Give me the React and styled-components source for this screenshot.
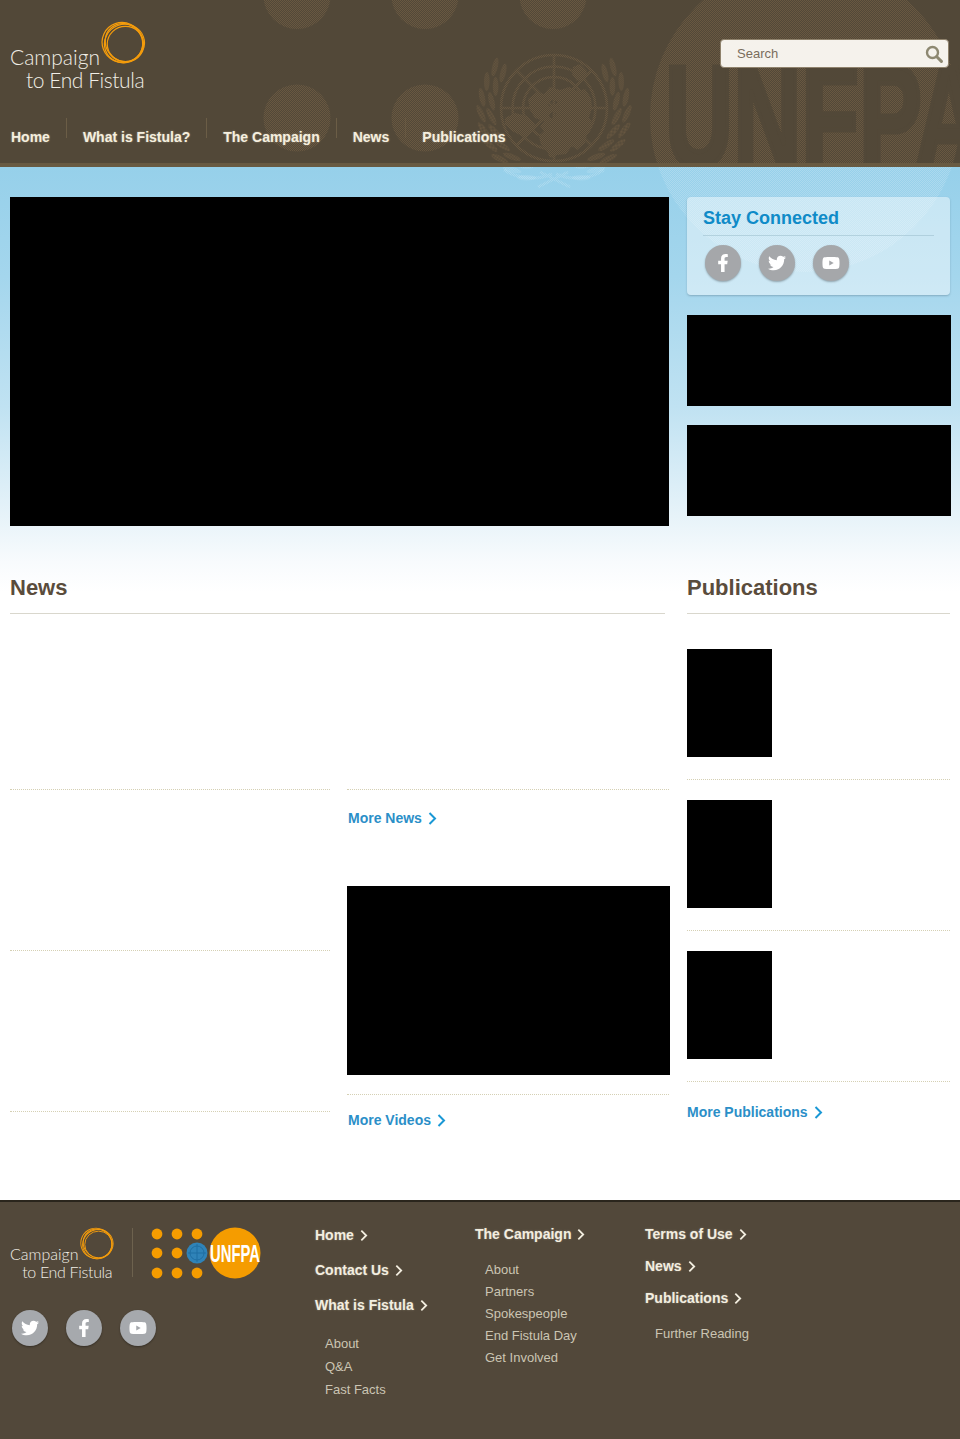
import React from "react";
import styled, { createGlobalStyle } from "styled-components";
import { FaFacebookF, FaTwitter, FaYoutube } from "react-icons/fa";

const Global = createGlobalStyle`
  html, body { margin: 0; padding: 0; background: #fff; }
  body { font-family: "Liberation Sans", Arial, sans-serif; }
  * { box-sizing: border-box; }
  a { text-decoration: none; color: inherit; }
  ul { list-style: none; margin: 0; padding: 0; }
`;

const Page = styled.div`
  width: 960px;
  overflow: hidden;
`;

/* ---------- background artwork ---------- */
const ArtSvg = styled.svg`
  position: absolute;
  left: 0;
  top: 0;
  width: 960px;
  pointer-events: none;
`;

const leaves = [];
[
  { r: 63, from: 118, n: 8, step: 14 },
  { r: 73, from: 112, n: 9, step: 13 },
].forEach(({ r, from, n, step }) => {
  for (let i = 0; i < n; i++) {
    const deg = from + i * step;
    const a = deg * (Math.PI / 180);
    leaves.push({ x: Math.cos(a) * r, y: Math.sin(a) * r + 2, rot: deg - 22 });
  }
});

function Artwork({ id, mark, top, height }) {
  const cx = 554;
  const cy = 108;
  return (
    <ArtSvg viewBox={`0 ${top} 960 ${height}`} height={height} aria-hidden="true">
      <defs>
        <pattern id={id} width="2" height="2" patternUnits="userSpaceOnUse">
          <rect x="0" y="0" width="1" height="1" fill={mark} />
          <rect x="1" y="1" width="1" height="1" fill={mark} />
        </pattern>
      </defs>
      <g fill={`url(#${id})`}>
        <circle cx="297" cy="-4.5" r="33.5" />
        <circle cx="425" cy="-4.5" r="33.5" />
        <circle cx="553" cy="-4.5" r="33.5" />
        <circle cx="297" cy="118" r="33.5" />
        <circle cx="425" cy="118" r="33.5" />
        <circle cx="805" cy="117" r="155" />
      </g>
      <g stroke={`url(#${id})`} fill="none">
        <circle cx={cx} cy={cy} r="53" strokeWidth="2.6" />
        <circle cx={cx} cy={cy} r="41.5" strokeWidth="2.6" />
        <circle cx={cx} cy={cy} r="31" strokeWidth="2.6" />
        <path strokeWidth="2.6" d="M554 55V161M501 108H607M517 71L591 145M591 71L517 145" />
      </g>
      <g fill={`url(#${id})`} fillRule="evenodd">
        <path d="M528 99l9-7 7 2 6-7 10 3 9-3 9 4 7-2 6 9 1 10-3 9 4 7-6 10-2 9-8 7-5-4-6 8-9 1-7 3-3-7-6-6-2-9 5-5-4-5 4-5-9-3-5-8zM548 103l6-4 5 4-1 5-4 2 2 4-2 5-5-2 1-4 3-3-1-4-3 1z" />
        <path d="M505 118l10-5 12 3 8 8-4 9-9 3-10-5-7-7zM573 67l7-3 7 7-2 8-8 2-5-7z" />
        {leaves.map((l, i) => (
          <g key={i}>
            <ellipse cx={cx + l.x} cy={cy + l.y} rx="2.8" ry="9.5" transform={`rotate(${l.rot} ${cx + l.x} ${cy + l.y})`} />
            <ellipse cx={cx - l.x} cy={cy + l.y} rx="2.8" ry="9.5" transform={`rotate(${-l.rot} ${cx - l.x} ${cy + l.y})`} />
          </g>
        ))}
      </g>
      <g stroke={`url(#${id})`} fill="none" strokeWidth="3">
        <path d="M504 170C520 180 538 180 552 174M604 170C588 180 570 180 556 174M538 187L568 172M570 187L540 172" />
      </g>
    </ArtSvg>
  );
}

const Wordmark = styled.text`
  font-family: "Liberation Sans", Arial, sans-serif;
  font-weight: 700;
  font-size: 144px;
  fill: #524838;
  stroke: #524838;
  stroke-width: 5px;
`;

/* ---------- logo ---------- */
const Brand = styled.a`
  position: relative;
  display: block;
  width: max-content;
  font-family: Lato, "Open Sans", sans-serif;
  font-weight: 300;
  font-size: ${(p) => p.$size}px;
  line-height: 1.1;
  color: #f1eee6;
`;

const BrandLine = styled.span`
  display: block;
  padding-left: ${(p) => (p.$indent ? "0.76em" : "0")};
  letter-spacing: ${(p) => (p.$indent ? "-0.02em" : "0")};
`;

const RingSvg = styled.svg`
  position: absolute;
  left: 4.35em;
  top: -1.12em;
  width: 2.14em;
  height: 2.1em;
`;

function Logo({ size }) {
  return (
    <Brand href="#" $size={size}>
      <RingSvg viewBox="0 0 46 45" aria-hidden="true">
        <g fill="none" stroke="#f49c0c" strokeWidth="1.25">
          <ellipse cx="22" cy="22" rx="21" ry="20.4" transform="rotate(25 22 22)" />
          <ellipse cx="24" cy="23" rx="20.6" ry="19.6" transform="rotate(-20 24 23)" />
          <ellipse cx="25" cy="23.5" rx="18.6" ry="18" />
          <ellipse cx="23.5" cy="22" rx="20" ry="18.6" transform="rotate(50 23.5 22)" />
        </g>
      </RingSvg>
      <BrandLine>Campaign</BrandLine>
      <BrandLine $indent>to End Fistula</BrandLine>
    </Brand>
  );
}

/* ---------- header ---------- */
const Header = styled.header`
  position: relative;
  height: 167px;
  background: #524838;
  border-bottom: 4px solid #685a42;
  overflow: hidden;
`;

const TopRow = styled.div`
  position: relative;
  display: flex;
  justify-content: space-between;
  align-items: flex-start;
  height: 118px;
  padding: 45px 11px 0 10px;
`;

const SearchBox = styled.form`
  display: flex;
  align-items: center;
  width: 229px;
  height: 29px;
  margin-top: -6px;
  padding: 0 5px 0 16px;
  background: #f5f2ec;
  border: 1px solid #8f826c;
  border-radius: 4px;
`;

const SearchInput = styled.input`
  flex: 1;
  min-width: 0;
  border: 0;
  padding: 0;
  background: transparent;
  font: 13px "Liberation Sans", Arial, sans-serif;
  color: #7a6d5c;
  outline: none;
  &::placeholder { color: #7a6d5c; opacity: 1; }
`;

const Nav = styled.nav`
  position: relative;
  display: flex;
  padding-left: 11px;
`;

const NavItem = styled.a`
  display: block;
  height: 20px;
  padding: 11px 16px 0 16px;
  border-right: 1px solid ${(p) => (p.$faint ? "rgba(120,102,74,.35)" : "#6b5d46")};
  font-size: 14px;
  line-height: 16px;
  font-weight: 700;
  color: #f5efdf;
  text-shadow: 0 0 2px rgba(255, 245, 220, 0.45);
  white-space: nowrap;
  &:first-child { padding-left: 0; }
  &:last-child { border-right: 0; }
`;

/* ---------- body ---------- */
const Wash = styled.div`
  position: relative;
  background: linear-gradient(
    180deg,
    #96d0ea 0,
    #a4d6ed 110px,
    #c0e2f2 240px,
    #e7f3f9 350px,
    #f8fbfd 395px,
    #fff 425px
  );
`;

const Hero = styled.section`
  position: relative;
  display: grid;
  grid-template-columns: 659px 264px;
  column-gap: 18px;
  padding: 30px 0 0 10px;
`;

const BlackBlock = styled.div`
  background: #000;
  width: ${(p) => p.$w || "auto"};
  height: ${(p) => p.$h}px;
  margin-bottom: ${(p) => p.$mb || 0}px;
`;

const Panel = styled.div`
  width: 263px;
  height: 98px;
  margin-bottom: 20px;
  padding: 10px 16px 0;
  background: rgba(255, 255, 255, 0.45);
  border-radius: 4px;
  box-shadow: 0 1px 2px rgba(60, 90, 110, 0.35);
`;

const PanelTitle = styled.h3`
  margin: 0 0 9px;
  padding-bottom: 6px;
  border-bottom: 1px solid rgba(150, 185, 200, 0.5);
  font-size: 18px;
  line-height: 22px;
  font-weight: 700;
  color: #0f8bc8;
`;

const SocialRow = styled.div`
  display: flex;
  gap: 18px;
  padding-left: ${(p) => p.$indent}px;
`;

const SocialDisc = styled.a`
  display: flex;
  align-items: center;
  justify-content: center;
  width: 36px;
  height: 36px;
  border-radius: 50%;
  background: #a5a7aa;
  color: #fff;
  font-size: 18px;
  box-shadow: 0 1px 2px rgba(0, 0, 0, 0.3);
`;

const Content = styled.main`
  position: relative;
  display: grid;
  grid-template-columns: 660px 263px;
  column-gap: 17px;
  padding: 49px 0 0 10px;
  height: 674px;
`;

const Heading = styled.h2`
  margin: 0 ${(p) => p.$inset || 0}px 0 0;
  padding-bottom: 12px;
  border-bottom: 1px solid #d9d7cd;
  font-size: 22px;
  line-height: 26px;
  font-weight: 700;
  color: #5a4c3c;
`;

const NewsGrid = styled.div`
  display: grid;
  grid-template-columns: 320px 323px;
  column-gap: 17px;
`;

const NewsSlot = styled.div`
  height: ${(p) => p.$h}px;
  width: ${(p) => p.$w || "auto"};
  border-bottom: 1px dotted #d5d0b4;
`;

const MoreLink = styled.a`
  display: flex;
  align-items: center;
  gap: 6px;
  width: max-content;
  margin-top: ${(p) => p.$mt}px;
  margin-left: ${(p) => p.$ml || 0}px;
  font-size: 14px;
  line-height: 18px;
  font-weight: 700;
  color: #2b8fc8;
`;

const ChevronSvg = styled.svg`
  flex: none;
  width: ${(p) => p.$w}px;
  height: ${(p) => p.$h}px;
`;

const Chevron = ({ color = "#1a98d5", w = 9, h = 13 }) => (
  <ChevronSvg viewBox="0 0 9 13" $w={w} $h={h} aria-hidden="true">
    <path d="M1.5 1L7 6.5L1.5 12" fill="none" stroke={color} strokeWidth="2" />
  </ChevronSvg>
);

const VideoWrap = styled.div`
  margin-top: 59px;
  padding-bottom: 19px;
`;

const VideoRule = styled.div`
  width: 322px;
  border-bottom: 1px dotted #d5d0b4;
`;

const PubItem = styled.div`
  padding: ${(p) => (p.$first ? 35 : 20)}px 0 22px;
  border-bottom: 1px dotted #d5d0b4;
`;

/* ---------- footer ---------- */
const Footer = styled.footer`
  display: grid;
  grid-template-columns: 315px 160px 170px 1fr;
  height: 239px;
  border-top: 2px solid #2a251c;
  background-color: #52483a;
`;

const FooterBrand = styled.div`
  padding: 26px 0 0 10px;
`;

const BrandRow = styled.div`
  display: flex;
  align-items: flex-start;
  height: 82px;
`;

const BrandText = styled.div`
  padding-top: 17px;
  width: 122px;
`;

const BrandDivider = styled.div`
  width: 1px;
  height: 49px;
  background: #6d624e;
`;

const UnfpaSvg = styled.svg`
  flex: none;
  width: 115px;
  height: 52px;
  margin: -1px 0 0 13px;
  overflow: visible;
`;

const UnfpaText = styled.text`
  font-family: "Liberation Sans", Arial, sans-serif;
  font-weight: 700;
  font-size: 23px;
  fill: #fff;
`;

function UnfpaLogo() {
  const xs = [11, 31, 51];
  const ys = [7, 26, 46];
  return (
    <UnfpaSvg viewBox="0 0 115 52" aria-hidden="true">
      <g fill="#f59c00">
        {ys.map((y) =>
          xs.map((x) =>
            x === 51 && y === 26 ? null : <circle key={`${x}${y}`} cx={x} cy={y} r="5.4" />
          )
        )}
        <circle cx="89" cy="26" r="25.5" />
      </g>
      <g>
        <circle cx="51" cy="26" r="10.5" fill="#2f83b8" />
        <g fill="none" stroke="#1f6ea3" strokeWidth="1">
          <circle cx="51" cy="26" r="7" />
          <path d="M51 17V35M42 26H60" />
        </g>
      </g>
      <UnfpaText x="64" y="34.5" textLength="50" lengthAdjust="spacingAndGlyphs">UNFPA</UnfpaText>
    </UnfpaSvg>
  );
}

const FooterDisc = styled(SocialDisc)`
  background: #a6a9ad;
  box-shadow: 0 1px 2px rgba(0, 0, 0, 0.35);
`;

const FooterCol = styled.div`
  padding-top: ${(p) => p.$top}px;
`;

const FootLink = styled.a`
  display: flex;
  align-items: center;
  gap: 6px;
  width: max-content;
  margin-bottom: ${(p) => p.$mb}px;
  font-size: 14px;
  line-height: 18px;
  font-weight: 700;
  color: #f3eee0;
  text-shadow: 0 0 2px rgba(255, 245, 220, 0.35);
`;

const SubList = styled.ul`
  display: flex;
  flex-direction: column;
  gap: ${(p) => p.$gap}px;
  margin-top: ${(p) => p.$mt}px;
  padding-left: 10px;
`;

const SubLink = styled.a`
  display: block;
  font-size: 13px;
  line-height: 18px;
  color: #cbc5b3;
`;

const HeadLink = ({ children, mb }) => (
  <FootLink href="#" $mb={mb}>
    {children}
    <Chevron color="#f3eee0" w={8} h={13} />
  </FootLink>
);

const MagnifierSvg = styled.svg`
  flex: none;
  width: 18px;
  height: 18px;
`;

export default function App() {
  return (
    <Page>
      <Global />
      <Header>
        <Artwork id="hdr" mark="#695841" top={0} height={163} />
        <ArtSvg viewBox="0 0 960 163" height={163} aria-hidden="true">
          <Wordmark x="665" y="167" textLength="318" lengthAdjust="spacingAndGlyphs">UNFPA</Wordmark>
        </ArtSvg>
        <TopRow>
          <Logo size={21} />
          <SearchBox onSubmit={(e) => e.preventDefault()}>
            <SearchInput placeholder="Search" aria-label="Search" />
            <MagnifierSvg viewBox="0 0 18 18" aria-hidden="true">
              <circle cx="7.5" cy="7.5" r="5.5" fill="none" stroke="#8d8871" strokeWidth="2.4" />
              <path d="M11.8 11.8L16.4 16.4" stroke="#8d8871" strokeWidth="3" strokeLinecap="round" />
            </MagnifierSvg>
          </SearchBox>
        </TopRow>
        <Nav>
          <NavItem href="#">Home</NavItem>
          <NavItem href="#">What is Fistula?</NavItem>
          <NavItem href="#">The Campaign</NavItem>
          <NavItem href="#" $faint>News</NavItem>
          <NavItem href="#">Publications</NavItem>
        </Nav>
      </Header>

      <Wash>
        <Artwork id="sky" mark="rgba(255,255,255,.2)" top={167} height={140} />
        <Hero>
          <BlackBlock $h={329} />
          <div>
            <Panel>
              <PanelTitle>Stay Connected</PanelTitle>
              <SocialRow $indent={2}>
                <SocialDisc href="#" aria-label="Facebook"><FaFacebookF /></SocialDisc>
                <SocialDisc href="#" aria-label="Twitter"><FaTwitter /></SocialDisc>
                <SocialDisc href="#" aria-label="YouTube"><FaYoutube /></SocialDisc>
              </SocialRow>
            </Panel>
            <BlackBlock $h={91} $mb={19} />
            <BlackBlock $h={91} />
          </div>
        </Hero>

        <Content>
          <section>
            <Heading $inset={5}>News</Heading>
            <NewsGrid>
              <div>
                <NewsSlot $h={176} />
                <NewsSlot $h={161} />
                <NewsSlot $h={161} />
              </div>
              <div>
                <NewsSlot $h={176} $w="322px" />
                <MoreLink href="#" $mt={19} $ml={1}>More News <Chevron /></MoreLink>
                <VideoWrap>
                  <BlackBlock $h={189} />
                </VideoWrap>
                <VideoRule />
                <MoreLink href="#" $mt={16} $ml={1}>More Videos <Chevron /></MoreLink>
              </div>
            </NewsGrid>
          </section>
          <section>
            <Heading>Publications</Heading>
            <PubItem $first><BlackBlock $w="85px" $h={108} /></PubItem>
            <PubItem><BlackBlock $w="85px" $h={108} /></PubItem>
            <PubItem><BlackBlock $w="85px" $h={108} /></PubItem>
            <MoreLink href="#" $mt={21}>More Publications <Chevron /></MoreLink>
          </section>
        </Content>
      </Wash>

      <Footer>
        <FooterBrand>
          <BrandRow>
            <BrandText><Logo size={16} /></BrandText>
            <BrandDivider />
            <UnfpaLogo />
          </BrandRow>
          <SocialRow $indent={2}>
            <FooterDisc href="#" aria-label="Twitter"><FaTwitter /></FooterDisc>
            <FooterDisc href="#" aria-label="Facebook"><FaFacebookF /></FooterDisc>
            <FooterDisc href="#" aria-label="YouTube"><FaYoutube /></FooterDisc>
          </SocialRow>
        </FooterBrand>

        <FooterCol $top={24}>
          <HeadLink mb={17}>Home</HeadLink>
          <HeadLink mb={17}>Contact Us</HeadLink>
          <HeadLink mb={0}>What is Fistula</HeadLink>
          <SubList $gap={5} $mt={21}>
            <li><SubLink href="#">About</SubLink></li>
            <li><SubLink href="#">Q&amp;A</SubLink></li>
            <li><SubLink href="#">Fast Facts</SubLink></li>
          </SubList>
        </FooterCol>

        <FooterCol $top={23}>
          <HeadLink mb={0}>The Campaign</HeadLink>
          <SubList $gap={4} $mt={18}>
            <li><SubLink href="#">About</SubLink></li>
            <li><SubLink href="#">Partners</SubLink></li>
            <li><SubLink href="#">Spokespeople</SubLink></li>
            <li><SubLink href="#">End Fistula Day</SubLink></li>
            <li><SubLink href="#">Get Involved</SubLink></li>
          </SubList>
        </FooterCol>

        <FooterCol $top={23}>
          <HeadLink mb={14}>Terms of Use</HeadLink>
          <HeadLink mb={14}>News</HeadLink>
          <HeadLink mb={0}>Publications</HeadLink>
          <SubList $gap={0} $mt={18}>
            <li><SubLink href="#">Further Reading</SubLink></li>
          </SubList>
        </FooterCol>
      </Footer>
    </Page>
  );
}
